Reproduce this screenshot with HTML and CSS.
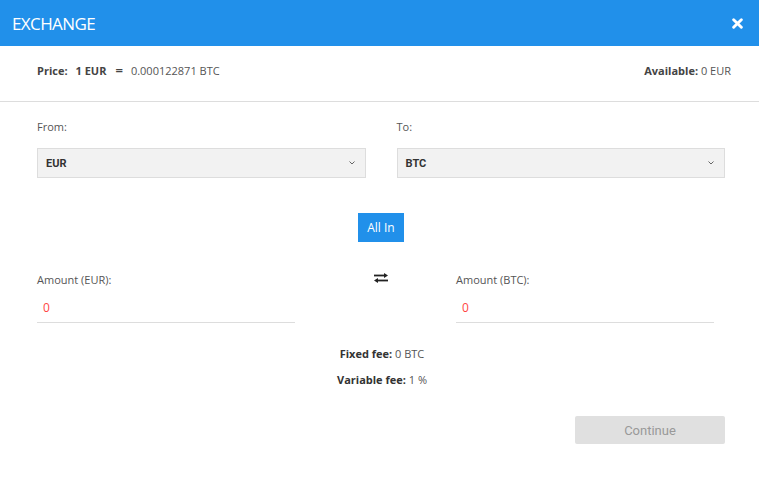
FILE: index.html
```html
<!DOCTYPE html>
<html>
<head>
<meta charset="utf-8">
<link rel="stylesheet" href="styles.css">
</head>
<body>
<div class="modal">
  <div class="header">
    <span class="title">EXCHANGE</span>
    <svg class="close" viewBox="0 0 10 10" width="11" height="11"><path d="M1.5 1.5 L8.5 8.5 M8.5 1.5 L1.5 8.5" stroke="#fff" stroke-width="2.6" stroke-linecap="round"/></svg>
  </div>
  <div class="info">
    <div class="price"><b>Price:</b><b class="one">1 EUR</b><b class="eq">=</b><span class="val">0.000122871 BTC</span></div>
    <div class="avail"><b>Available:</b> 0 EUR</div>
  </div>
  <div class="body">
    <div class="selects">
      <div class="field">
        <div class="label">From:</div>
        <div class="select"><span>EUR</span><svg viewBox="0 0 6 4" width="6" height="4"><path d="M0.5 0.5 L3 3 L5.5 0.5" fill="none" stroke="#666" stroke-width="1"/></svg></div>
      </div>
      <div class="field">
        <div class="label">To:</div>
        <div class="select"><span>BTC</span><svg viewBox="0 0 6 4" width="6" height="4"><path d="M0.5 0.5 L3 3 L5.5 0.5" fill="none" stroke="#666" stroke-width="1"/></svg></div>
      </div>
    </div>
    <div class="allin-row"><button class="allin">All In</button></div>
    <div class="amounts">
      <div class="amount">
        <div class="label">Amount (EUR):</div>
        <div class="input">0</div>
      </div>
      <div class="swap">
        <svg viewBox="0 0 16 10" width="16" height="10"><path d="M1 2.5 H12" stroke="#222" stroke-width="1.8"/><path d="M11 0 L15 2.5 L11 5 Z" fill="#222"/><path d="M4 7.5 H15" stroke="#222" stroke-width="1.8"/><path d="M5 5 L1 7.5 L5 10 Z" fill="#222"/></svg>
      </div>
      <div class="amount">
        <div class="label">Amount (BTC):</div>
        <div class="input">0</div>
      </div>
    </div>
    <div class="fees">
      <div><b>Fixed fee:</b> 0 BTC</div>
      <div class="fee2"><b>Variable fee:</b> 1 %</div>
    </div>
    <div class="actions"><button class="continue">Continue</button></div>
  </div>
</div>
</body>
</html>
```
FILE: styles.css
```css
html, body { margin: 0; padding: 0; background: #fff; }
body { font-family: "Open Sans", "Liberation Sans", sans-serif; color: #555; }
.modal { width: 759px; }
.header {
  height: 46px; background: #2190ea; color: #fff;
  display: flex; align-items: center; justify-content: space-between;
  padding: 0 16px 0 12px; box-sizing: border-box;
}
.title { font-size: 17px; letter-spacing: -0.6px; }
.close { display: block; }
.info {
  display: flex; justify-content: space-between;
  padding: 17px 28px 23px 37px; font-size: 11px; line-height: 15px;
  border-bottom: 1px solid #ddd; color: #555;
}
.info b { color: #444; font-weight: 700; }
.price { display: flex; }
.one { margin-left: 8px; }
.eq { margin: 0 8px 0 9px; font-size: 13px; font-weight: 600; line-height: 15px; }
.body { padding: 17px 34px 0 37px; }
.selects { display: flex; gap: 31px; }
.field { flex: 1; }
.label { font-size: 11px; line-height: 15px; color: #555; }
.select {
  margin-top: 14px; height: 30px; box-sizing: border-box;
  background: #f2f2f2; border: 1px solid #ddd;
  display: flex; align-items: center; justify-content: space-between;
  padding: 0 10px 0 8px;
  font-family: Roboto, "Liberation Sans", sans-serif; font-weight: 700; font-size: 11px; color: #333;
}
.select svg { display: block; }
.allin-row { display: flex; justify-content: center; margin-top: 35px; }
.allin {
  width: 46px; height: 29px; border: none; background: #2190ea; color: #fff;
  font-family: "Open Sans", sans-serif; font-size: 12px; padding: 0;
}
.amounts {
  display: grid; grid-template-columns: 258px 1fr 258px; padding-right: 11px;
  margin-top: 30px;
}
.swap { display: flex; justify-content: center; padding-left: 10px; }
.swap svg { display: block; margin-top: 1px; }
.input {
  margin-top: 11px; height: 25px; box-sizing: border-box; border-bottom: 1px solid #ddd;
  color: #f44; font-size: 12px; line-height: 16px; padding: 2px 6px 0;
}
.fees { text-align: center; font-size: 11px; line-height: 15px; margin-top: 23px; color: #555; padding-left: 2px; }
.fees b { color: #333; }
.fee2 { margin-top: 11px; }
.actions { display: flex; justify-content: flex-end; margin-top: 29px; }
.continue {
  width: 150px; height: 28px; border: none; border-radius: 2px; background: #e0e0e0; color: #999;
  font-family: Roboto, "Liberation Sans", sans-serif; font-size: 13px; padding: 0;
}
```
